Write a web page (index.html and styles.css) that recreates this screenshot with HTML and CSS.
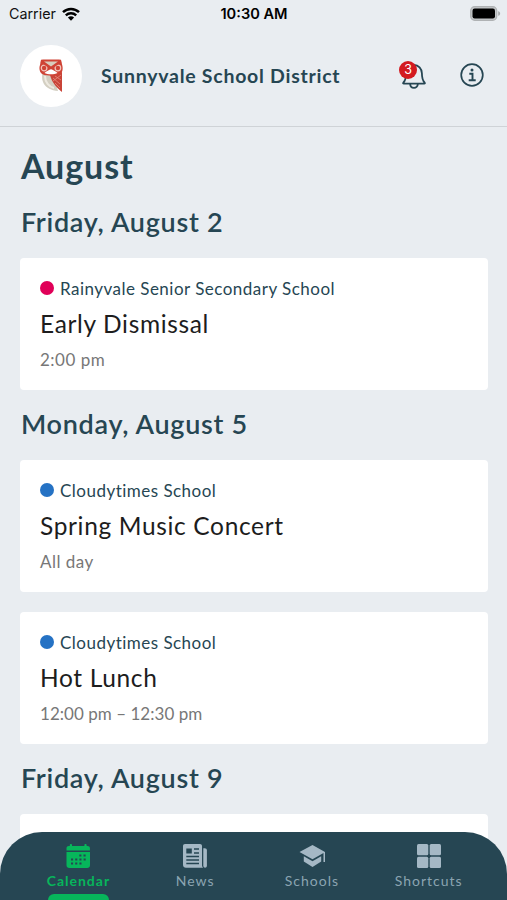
FILE: index.html
```html
<!DOCTYPE html>
<html lang="en">
<head>
  <meta charset="UTF-8">
  <meta name="viewport" content="width=device-width, initial-scale=1.0">
  <title>Sunnyvale School District</title>
  <link rel="stylesheet" href="styles.css">
</head>
<body>
  <div class="app">

    <div class="status-bar">
      <div class="carrier">
        <span>Carrier</span>
        <svg width="18" height="14" viewBox="0 0 18 14">
          <path d="M1 5.2a11.6 11.6 0 0 1 16 0" fill="none" stroke="#000" stroke-width="2.5"/>
          <path d="M3.8 8.3a7.6 7.6 0 0 1 10.4 0" fill="none" stroke="#000" stroke-width="2.4"/>
          <path d="M9 13.8 5.9 10.6a4.5 4.5 0 0 1 6.2 0z"/>
        </svg>
      </div>
      <div class="clock">10:30 AM</div>
      <div class="battery">
        <svg width="31" height="15" viewBox="0 0 31 15">
          <rect x="0.7" y="0.7" width="26" height="13.6" rx="4" fill="#c3c6c8" stroke="#afb2b4" stroke-width="1.3"/>
          <rect x="2.5" y="2.5" width="22.5" height="10" rx="2.2"/>
          <path d="M28.2 5.2c2.6.6 2.6 4 0 4.6z" fill="#a5a8aa"/>
        </svg>
      </div>
    </div>

    <header>
      <div class="logo">
        <svg width="26" height="34" viewBox="0 0 26 34">
          <path d="M5 13C2 21 6 31 20 32L16 18z" fill="#d3cfc2"/>
          <path d="M7 17c0 6 4 11 9 12" fill="none" stroke="#eeeae1" stroke-width="2"/>
          <path d="M12 16 24 13v20C19 29 14 24 12 16z" fill="#c94438"/>
          <path d="M15 19l7 6M17 17l6 4M17 24l5 5M15 22l8-6" stroke="#e68c7e" stroke-width=".8"/>
          <path d="M3 .8c3-.6 5-.3 10-.3s7-.3 10 .3L24.200 6c1 4 .5 8-3.200 9.500-4 1.500-12 1.500-16 0C1.500 14 .8 9 2 6z" fill="#cf4335"/>
          <path d="M6 2.500h14l-7 5z" fill="#d8cdbd"/>
          <path d="M6.500 14c1-1.500 4-2.500 6.500-4 2.500 1.500 5.500 2.500 6.500 4-3 1.800-10 1.800-13 0z" fill="#fff"/>
          <circle cx="6.100" cy="9" r="2.800" fill="#cf4335" stroke="#f2c6bd" stroke-width="1.200"/>
          <circle cx="19.900" cy="9" r="2.800" fill="#cf4335" stroke="#f2c6bd" stroke-width="1.200"/>
          <path d="M3 2.500l10 7 10-7" fill="none" stroke="#cf4335" stroke-width="1.600"/>
        </svg>
      </div>
      <h1>Sunnyvale School District</h1>
      <div class="bell">
        <svg width="24" height="26" viewBox="0 0 24 26">
          <path d="M1.300 19.700c2.200-2.300 2.800-3.900 2.800-9.500C4.300 5.500 7.500 2 12 2s7.700 3.500 7.900 8.200c0 5.600.6 7.200 2.800 9.500.4.500.2 1-.5 1H1.800c-.7 0-.9-.5-.5-1z" fill="none" stroke="#264653" stroke-width="1.800" stroke-linejoin="round"/>
          <path d="M8.200 21c0 5.200 7.600 5.200 7.600 0" fill="none" stroke="#264653" stroke-width="1.800"/>
        </svg>
        <span class="badge">3</span>
      </div>
      <svg class="info" width="24" height="24" viewBox="0 0 24 24">
        <circle cx="12" cy="12" r="10.800" fill="none" stroke="#264653" stroke-width="1.700"/>
        <circle cx="12" cy="7.100" r="1.500" fill="#264653"/>
        <path d="M9.300 10.700H12.500V17M8.700 17.200h7" fill="none" stroke="#264653" stroke-width="1.900"/>
      </svg>
    </header>

    <main>
      <h2>August</h2>

      <h3>Friday, August 2</h3>
      <div class="event">
        <div class="school"><span class="dot pink"></span>Rainyvale Senior Secondary School</div>
        <div class="title">Early Dismissal</div>
        <div class="time">2:00 pm</div>
      </div>

      <h3>Monday, August 5</h3>
      <div class="event">
        <div class="school"><span class="dot blue"></span>Cloudytimes School</div>
        <div class="title">Spring Music Concert</div>
        <div class="time">All day</div>
      </div>
      <div class="event">
        <div class="school"><span class="dot blue"></span>Cloudytimes School</div>
        <div class="title">Hot Lunch</div>
        <div class="time range">12:00 pm – 12:30 pm</div>
      </div>

      <h3>Friday, August 9</h3>
      <div class="event"></div>
    </main>

    <nav>
      <a class="tab active">
        <svg width="26" height="26" viewBox="0 0 26 26" fill="currentColor">
          <path d="M1.500 7.500V5c0-1.200 1-2 2.300-2h1V1.700c0-1 2.200-1 2.200 0V3h12.400V1.700c0-1 2.200-1 2.200 0V3h1c1.300 0 2.300.8 2.300 2v2.500z"/>
          <path d="M1.500 9H25v13.200c0 1.700-1.200 2.800-2.800 2.800H4.300c-1.600 0-2.800-1.100-2.800-2.800z"/>
          <path d="M14.300 12.500h6.500M6 16.500h14.800M6 20.500h10.800" stroke="#264653" stroke-width="2" stroke-dasharray="2.100 2.100"/>
        </svg>
        <span>Calendar</span>
      </a>
      <a class="tab">
        <svg width="26" height="26" viewBox="0 0 26 26" fill="currentColor">
          <path d="M3 1h15c1.200 0 2 .8 2 2v19c0 1.200.4 2.200 1.200 2.800H4c-1.800 0-3-1.200-3-3V3c0-1.200.8-2 2-2z"/>
          <path d="M21.300 5.200h1.500c1.200 0 2.100.8 2.100 2v15.200c0 3-3.600 3-3.600 0z"/>
          <rect x="4.300" y="5.500" width="5.500" height="5" fill="#264653"/>
          <path d="M12 6h5M12 10h5M4.300 13.500h12.700M4.300 17h12.700M4.300 20.500h12.700" stroke="#264653" stroke-width="1.400"/>
        </svg>
        <span>News</span>
      </a>
      <a class="tab">
        <svg width="26" height="26" viewBox="0 0 26 26" fill="currentColor">
          <path d="M13.500 2 .5 9l13 7.300L24.500 10v9H26V9z"/>
          <path d="M4.800 13.200 13.500 18.300l8.700-5.100v5.300L13.500 24l-8.700-5.500z"/>
        </svg>
        <span>Schools</span>
      </a>
      <a class="tab">
        <svg width="26" height="26" viewBox="0 0 26 26" fill="currentColor">
          <rect x="1" y="1" width="11.300" height="11.300" rx="1.500"/>
          <rect x="13.700" y="1" width="11.300" height="11.300" rx="1.500"/>
          <rect x="1" y="13.700" width="11.300" height="11.300" rx="1.500"/>
          <rect x="13.700" y="13.700" width="11.300" height="11.300" rx="1.500"/>
        </svg>
        <span>Shortcuts</span>
      </a>
    </nav>

  </div>
</body>
</html>
```
FILE: styles.css
```css
* {
  box-sizing: border-box;
}

body {
  margin: 0;
  font-family: Lato, sans-serif;
  background-color: #e9edf1;
  color: #264653;
}

.app {
  position: relative;
  height: 900px;
  overflow: hidden;
}

svg {
  display: block;
}

/* status bar */
.status-bar {
  display: grid;
  grid-template-columns: 1fr auto 1fr;
  align-items: center;
  height: 27px;
  padding: 0 6px 0 9px;
  font-family: Inter, sans-serif;
  font-size: 14.3px;
  color: #111;
}

.carrier {
  display: flex;
  align-items: center;
  gap: 6px;
}

.clock {
  padding-right: 2px;
  font-size: 14.6px;
  font-weight: 600;
  color: #000;
}

.battery {
  justify-self: end;
}

/* header */
header {
  display: flex;
  align-items: center;
  height: 100px;
  padding: 0 23px 1px 20px;
  border-bottom: 1px solid #cfd3d7;
}

.logo {
  display: flex;
  align-items: center;
  justify-content: center;
  width: 62px;
  height: 62px;
  border-radius: 50%;
  background-color: white;
}

h1 {
  flex: 1;
  margin: 0 0 0 19px;
  font-size: 19.5px;
  line-height: 24px;
  font-weight: 700;
  letter-spacing: 0.74px;
  white-space: nowrap;
}

.bell {
  position: relative;
  margin-right: 34px;
}

.info {
  margin-bottom: 2px;
}

.badge {
  position: absolute;
  top: -2px;
  left: -3px;
  width: 18px;
  height: 18px;
  border-radius: 50%;
  background-color: #d31a20;
  color: white;
  font-family: Inter, sans-serif;
  font-size: 12.5px;
  line-height: 18px;
  text-align: center;
}

/* calendar list */
main {
  padding: 19px 19px 0 20px;
}

h2 {
  margin: 0 0 2px 1px;
  font-size: 34px;
  line-height: 40px;
  font-weight: 700;
  letter-spacing: 0.9px;
}

h3 {
  margin: 0 0 0 1px;
  padding: 17px 0 19px;
  font-size: 27px;
  line-height: 34px;
  font-weight: 600;
  letter-spacing: 0.7px;
}

.event {
  height: 132px;
  padding: 20px;
  border-radius: 4px;
  background-color: white;
}

.event + .event {
  margin-top: 20px;
}

.school {
  display: flex;
  align-items: center;
  gap: 6px;
  font-size: 17px;
  line-height: 21px;
  letter-spacing: 0.48px;
}

.dot {
  width: 14px;
  height: 14px;
  margin-bottom: 2px;
  border-radius: 50%;
}

.pink {
  background-color: #e00058;
}

.blue {
  background-color: #2572c4;
}

.title {
  margin-top: 10px;
  font-size: 24.5px;
  line-height: 30px;
  letter-spacing: 0.65px;
  color: #1d1d1d;
}

.time {
  margin-top: 11px;
  font-size: 17px;
  line-height: 20px;
  letter-spacing: 0.5px;
  color: #777;
}

.range {
  letter-spacing: 0.03px;
}

/* bottom tabs */
nav {
  position: absolute;
  left: 0;
  right: 0;
  bottom: 0;
  display: flex;
  height: 68px;
  padding: 11px 20px 0;
  border-radius: 42px 42px 0 0;
  background-color: #264653;
}

.tab {
  flex: 1;
  display: flex;
  flex-direction: column;
  align-items: center;
  color: #a5b8c5;
  font-size: 14px;
  line-height: 18px;
  letter-spacing: 1px;
}

.tab span {
  margin-top: 3px;
  color: #8ba4b1;
}

.active,
.active span {
  color: #07b65b;
  font-weight: 700;
}

.active::after {
  content: "";
  width: 61px;
  height: 6px;
  margin-top: 4px;
  border-radius: 6px 6px 0 0;
  background-color: #07b65b;
}
```
